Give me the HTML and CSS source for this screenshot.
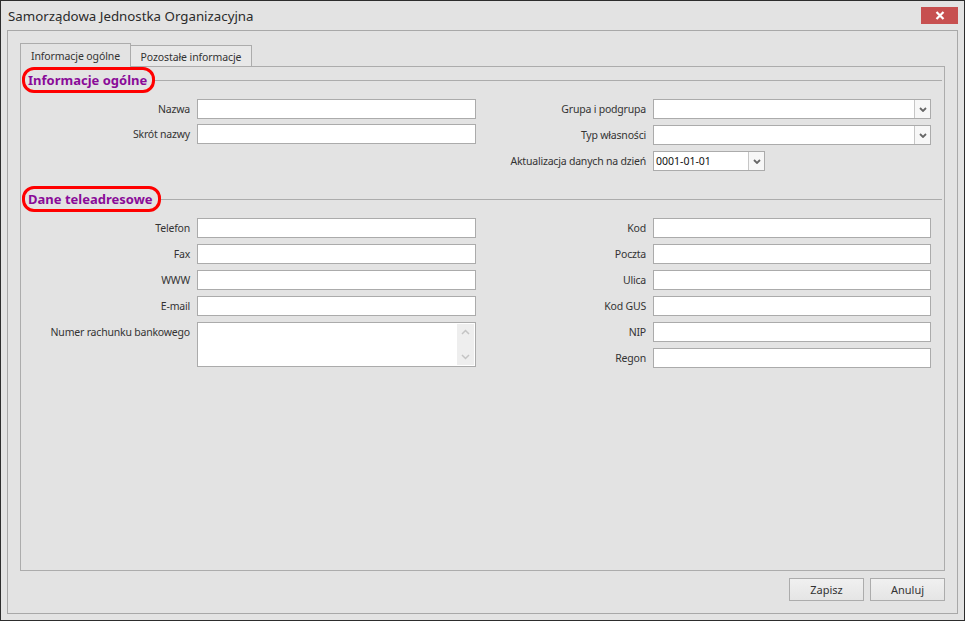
FILE: index.html
```html
<!DOCTYPE html>
<html lang="pl">
<head>
<meta charset="utf-8">
<title>Samorządowa Jednostka Organizacyjna</title>
<link rel="stylesheet" href="styles.css">
</head>
<body>
<div class="window">
  <div class="titlebar">
    <span class="title">Samorządowa Jednostka Organizacyjna</span>
    <div class="close">
      <svg width="10" height="9" viewBox="0 0 10 9"><path d="M1.5 1 L8.5 8 M8.5 1 L1.5 8" stroke="#fff" stroke-width="2.2" fill="none"/></svg>
    </div>
  </div>
  <div class="frame">
    <div class="tabs">
      <div class="tab active">Informacje ogólne</div>
      <div class="tab inactive">Pozostałe informacje</div>
    </div>
    <div class="page">
      <div class="section-head">
        <span class="badge">Informacje ogólne</span>
        <span class="rule"></span>
      </div>
      <div class="cols sec1">
        <div class="col left g5">
          <span class="lbl">Nazwa</span><div class="input"></div>
          <span class="lbl">Skrót nazwy</span><div class="input"></div>
        </div>
        <div class="col right">
          <span class="lbl">Grupa i podgrupa</span>
          <div class="input combo"><span class="val"></span><span class="drop"><svg width="8" height="5" viewBox="0 0 8 5"><path d="M1 1 L4 4 L7 1" stroke="#666" stroke-width="1.8" fill="none"/></svg></span></div>
          <span class="lbl">Typ własności</span>
          <div class="input combo"><span class="val"></span><span class="drop"><svg width="8" height="5" viewBox="0 0 8 5"><path d="M1 1 L4 4 L7 1" stroke="#666" stroke-width="1.8" fill="none"/></svg></span></div>
          <span class="lbl">Aktualizacja danych na dzień</span>
          <div class="input combo date"><span class="val">0001-01-01</span><span class="drop"><svg width="8" height="5" viewBox="0 0 8 5"><path d="M1 1 L4 4 L7 1" stroke="#666" stroke-width="1.8" fill="none"/></svg></span></div>
        </div>
      </div>
      <div class="section-head sec2head">
        <span class="badge">Dane teleadresowe</span>
        <span class="rule"></span>
      </div>
      <div class="cols sec2">
        <div class="col left">
          <span class="lbl">Telefon</span><div class="input"></div>
          <span class="lbl">Fax</span><div class="input"></div>
          <span class="lbl">WWW</span><div class="input"></div>
          <span class="lbl">E-mail</span><div class="input"></div>
          <span class="lbl top">Numer rachunku bankowego</span>
          <div class="input memo">
            <span class="sbar">
              <svg width="9" height="6" viewBox="0 0 9 6"><path d="M1 5 L4.5 1.5 L8 5" stroke="#c4c4c4" stroke-width="1.5" fill="none"/></svg>
              <svg width="9" height="6" viewBox="0 0 9 6"><path d="M1 1 L4.5 4.5 L8 1" stroke="#c4c4c4" stroke-width="1.5" fill="none"/></svg>
            </span>
          </div>
        </div>
        <div class="col right">
          <span class="lbl">Kod</span><div class="input"></div>
          <span class="lbl">Poczta</span><div class="input"></div>
          <span class="lbl">Ulica</span><div class="input"></div>
          <span class="lbl">Kod GUS</span><div class="input"></div>
          <span class="lbl">NIP</span><div class="input"></div>
          <span class="lbl">Regon</span><div class="input"></div>
        </div>
      </div>
    </div>
    <div class="footer">
      <button class="btn">Zapisz</button>
      <button class="btn">Anuluj</button>
    </div>
  </div>
</div>
</body>
</html>
```
FILE: styles.css
```css
* { box-sizing: border-box; }
html, body { margin: 0; padding: 0; }
body {
  width: 965px;
  height: 621px;
  overflow: hidden;
  font-family: "Noto Sans", "Open Sans", sans-serif;
  font-size: 10.5px;
  color: #333;
  background: #e3e3e3;
}
.window {
  width: 965px;
  height: 621px;
  border: 1px solid #2d2d2d;
  background: #e3e3e3;
  display: flex;
  flex-direction: column;
}
.titlebar {
  height: 29px;
  flex: none;
  display: flex;
  align-items: center;
  justify-content: space-between;
  padding: 0 6px 0 7px;
}
.title {
  font-size: 13.3px;
  color: #2b2b2b;
  margin-top: 1px;
}
.close {
  width: 37px;
  height: 17px;
  background: #c75050;
  display: flex;
  align-items: center;
  justify-content: center;
}
.close svg { display: block; }
.frame {
  flex: 1;
  margin: 0 6px 6px 6px;
  border: 1px solid #a8a8a8;
  padding: 12px;
  display: flex;
  flex-direction: column;
  min-height: 0;
}
.tabs {
  height: 23px;
  flex: none;
  display: flex;
  align-items: flex-end;
}
.tab {
  border: 1px solid #acacac;
  border-bottom: none;
  display: flex;
  align-items: center;
  justify-content: center;
  color: #333;
  white-space: nowrap;
  font-size: 10.5px;
  letter-spacing: -0.1px;
}
.tab.active {
  width: 111px;
  height: 24px;
  margin-bottom: -1px;
  background: #e3e3e3;
  position: relative;
  z-index: 1;
}
.tab.inactive {
  width: 122px;
  height: 21px;
  margin-left: -1px;
  padding-top: 1px;
  background: #e8e8e8;
}
.page {
  flex: 1;
  border: 1px solid #acacac;
  padding: 0 1px 0 0;
  min-height: 0;
}
.section-head {
  display: flex;
  align-items: center;
  height: 26px;
  padding-left: 1px;
}
.badge {
  height: 26px;
  border: 3px solid #ff0000;
  border-radius: 12px;
  padding: 0 5px 0 3px;
  display: flex;
  align-items: center;
  font-weight: bold;
  font-size: 13px;
  color: #8a0b98;
  white-space: nowrap;
}
.rule {
  flex: 1;
  height: 1px;
  background: #acacac;
  margin-right: 1px;
}
.cols {
  display: flex;
  align-items: flex-start;
  margin-top: 6px;
}
.col {
  display: grid;
  column-gap: 7px;
  row-gap: 6px;
  grid-auto-rows: 20px;
}
.col.g5 { row-gap: 5px; }
.col.left { grid-template-columns: 169px 279px; }
.col.right { grid-template-columns: 166px 278px; margin-left: 4px; }
.lbl {
  text-align: right;
  align-self: center;
  white-space: nowrap;
  line-height: 14px;
  letter-spacing: -0.2px;
}
.lbl.top { align-self: start; padding-top: 3px; }
.input {
  height: 20px;
  border: 1px solid #ababab;
  background: #fff;
}
.combo {
  display: flex;
  align-items: stretch;
}
.combo .val {
  flex: 1;
  padding-left: 2px;
  line-height: 18px;
  color: #111;
}
.combo .drop {
  width: 16px;
  border-left: 1px solid #c6c6c6;
  background: #f7f7f7;
  display: flex;
  align-items: center;
  justify-content: center;
}
.combo .drop svg { display: block; }
.combo.date { width: 112px; }
.memo {
  height: 45px;
  display: flex;
  justify-content: flex-end;
}
.memo .sbar {
  width: 17px;
  margin: 1px 1px 1px 0;
  background: #eeeeee;
  display: flex;
  flex-direction: column;
  justify-content: space-between;
  align-items: center;
  padding: 5px 0 5px;
}
.memo .sbar svg { display: block; }
.sec2head { margin-top: 15px; }
.footer {
  flex: none;
  margin-top: 7px;
  display: flex;
  justify-content: flex-end;
  gap: 6px;
}
.btn {
  width: 75px;
  height: 23px;
  border: 1px solid #acacac;
  background: linear-gradient(#f0f0f0, #e5e5e5);
  font-family: "Noto Sans", "Open Sans", sans-serif;
  font-size: 11px;
  color: #333;
  padding: 0;
  margin: 0;
}
```
